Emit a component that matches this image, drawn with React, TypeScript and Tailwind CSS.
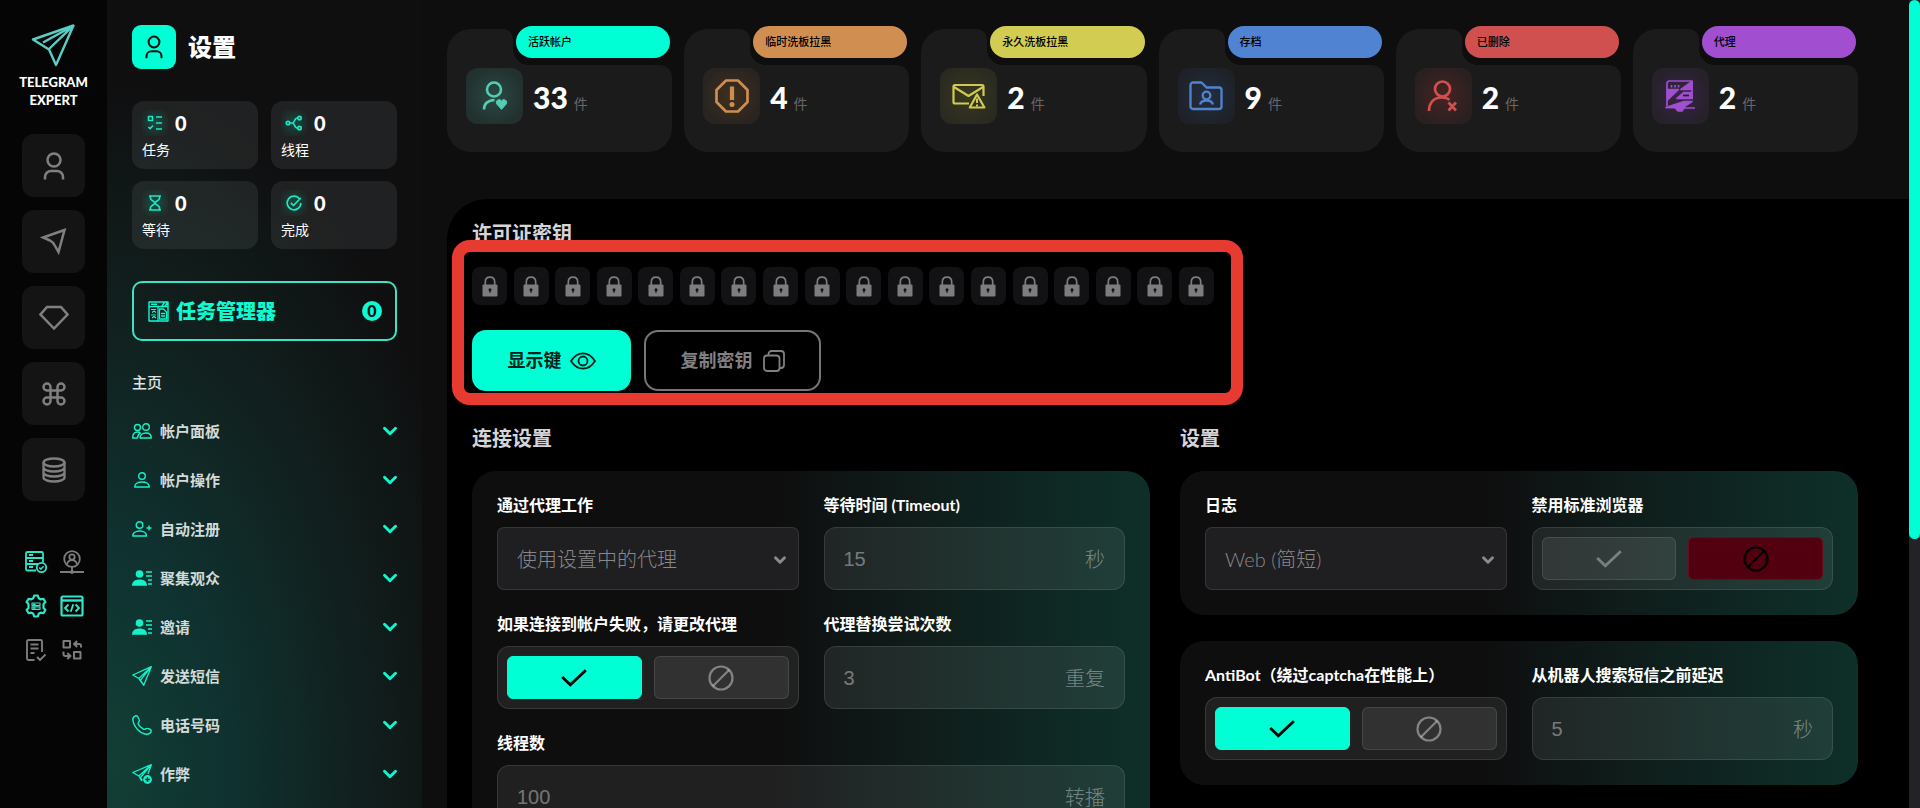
import { Check, ChevronDown, Command } from 'lucide-react';
import type { ReactNode } from 'react';

/* ---------- icons ---------- */

function Svg({ w, h, box, sw = 2, className, children }: { w: number; h: number; box?: string; sw?: number; className?: string; children: ReactNode }) {
  return (
    <svg width={w} height={h} viewBox={box ?? `0 0 ${w} ${h}`} fill="none" stroke="currentColor" strokeWidth={sw} strokeLinejoin="round" className={className} aria-hidden="true">
      {children}
    </svg>
  );
}

const LogoMark = () => (
  <Svg w={44} h={44} sw={2.4} className="text-[#5acdc6]">
    <path d="M42.500 1.500 L2 15.500 L18 25.500 L25 41 Z" />
    <path d="M42 2 L18 25 M42 2 L12 18.500" />
    <path d="M42 2 L22 21" strokeWidth={1.500} />
  </Svg>
);

const Person = ({ w = 24, h = 28, sw = 2.5 }: { w?: number; h?: number; sw?: number }) => (
  <Svg w={w} h={h} box="0 0 24 28" sw={sw}>
    <circle cx="12" cy="8" r="6.500" />
    <path d="M3 27.500v-2.500a6 6 0 0 1 6-6h6a6 6 0 0 1 6 6v2.500" />
  </Svg>
);

const NavArrow = () => (
  <Svg w={27} h={27} sw={2.5}>
    <path d="M24.500 2 L3 9.500 L10 12.500 Q13 14 14.500 17 L18.500 24 Z" strokeLinejoin="miter" />
  </Svg>
);

const Gem = () => (
  <Svg w={30} h={26} sw={2.5}>
    <path d="M8 2h14l6.500 7.500L15 23.500 1.500 9.500z" strokeLinejoin="miter" />
  </Svg>
);

const Stack = () => (
  <Svg w={24} h={26} sw={2.3}>
    <ellipse cx="12" cy="5.500" rx="10.500" ry="4" />
    <path d="M1.500 5.500v15c0 2.200 4.700 4 10.500 4s10.500-1.800 10.500-4v-15M1.500 10.500c0 2.200 4.700 4 10.500 4s10.500-1.800 10.500-4M1.500 15.500c0 2.200 4.700 4 10.500 4s10.500-1.800 10.500-4" />
  </Svg>
);

const ServerCheck = () => (
  <Svg w={24} h={24} sw={1.8}>
    <path d="M12 20.500H3.500a1.500 1.500 0 0 1-1.500-1.500V3.500A1.500 1.500 0 0 1 3.500 2h14A1.500 1.500 0 0 1 19 3.500v9M2 8h17M2 14h12" />
    <path d="M5 5h4M5 11h4M5 17h4" strokeWidth={2} />
    <circle cx="17.500" cy="17.500" r="4.700" />
    <path d="m15.300 17.500 1.600 1.600 2.800-2.900" strokeWidth={1.500} />
  </Svg>
);

const NetworkUser = () => (
  <Svg w={24} h={24} sw={1.8}>
    <circle cx="12" cy="9" r="7.800" />
    <circle cx="12" cy="7" r="2.700" />
    <path d="M7 14.500c.6-3 2.300-4.300 5-4.300s4.400 1.300 5 4.300M12 17v4M0 22h24" />
    <circle cx="12" cy="22" r="1" fill="currentColor" />
  </Svg>
);

const GearServer = () => (
  <Svg w={24} h={24} sw={2.2}>
    <path d="M9.300 4.200 10.200 1.500h3.600l.9 2.700 2 1.200 2.700-.6 2 3.200-1.900 2v4l1.900 2-2 3.200-2.700-.6-2 1.200-.9 2.700h-3.600l-.9-2.700-2-1.200-2.700.6-2-3.200 1.900-2v-4l-1.900-2 2-3.200 2.700.6z" />
    <path d="M8 9h8v2.500H8zM8 12.800h8v2.500H8z" strokeWidth={1.200} />
    <path d="M9 10.200h2.500M9 14h2.500" strokeWidth={1.400} />
  </Svg>
);

const CodeWindow = () => (
  <Svg w={24} h={24} sw={2.2}>
    <rect x="1.500" y="2.500" width="21" height="19" rx="1.500" />
    <path d="M1.500 6.500h21" strokeWidth={2.400} />
    <path d="m8.500 10.500-3.500 3.500 3.500 3.500M15.500 10.500 19 14l-3.500 3.500M13.300 10.300l-2.600 7.400" strokeWidth={1.900} />
  </Svg>
);

const DocCheck = () => (
  <Svg w={24} h={24} sw={1.9}>
    <path d="M10.500 22H4.500A1.500 1.500 0 0 1 3 20.500v-17A1.500 1.500 0 0 1 4.500 2h12A1.500 1.500 0 0 1 18 3.500V14M6.500 6.500h8M6.500 10.500h8M6.500 15h4M13 19l3 3 5.500-5.500" />
  </Svg>
);

const SwapBoxes = () => (
  <Svg w={24} h={24} sw={2}>
    <rect x="3.500" y="3" width="6.500" height="6.500" />
    <rect x="14" y="14" width="6.500" height="6.500" />
    <path d="M21 9.500V8a2 2 0 0 0-2-2h-4.500m2.700-3L14 6l3.200 3M3.500 13.500V16a2 2 0 0 0 2 2H10M7.300 15l3.200 3-3.200 3" />
  </Svg>
);

const TaskIcon = () => (
  <Svg w={16} h={16} sw={1.5}>
    <path d="M1.500 1.500h4v4h-4zM9 2h6M9 8h6M9 14h6M1.500 12l1.600 1.800L6 10.500" />
  </Svg>
);
const BranchIcon = () => (
  <Svg w={18} h={16} sw={1.700}>
    <circle cx="3" cy="8" r="1.700" />
    <circle cx="14.500" cy="3" r="1.700" />
    <circle cx="14.500" cy="13" r="1.700" />
    <path d="M5 8h2.500c2.500 0 1.500-5 5-5M7.500 8c2.500 0 1.500 5 5 5" />
  </Svg>
);
const HourglassIcon = () => (
  <Svg w={14} h={16} sw={1.700}>
    <path d="M1 1h12M1 15h12M2.500 1v2.500c0 2 4.500 3 4.500 4.500s-4.500 2.500-4.500 4.500V15M11.500 1v2.500c0 2-4.500 3-4.500 4.500s4.500 2.500 4.500 4.500V15" />
  </Svg>
);
const DoneIcon = () => (
  <Svg w={16} h={16} sw={1.700}>
    <path d="M13.500 4A6.800 6.800 0 1 0 14.800 8M4.800 7.800l2.700 2.700L14.800 3" />
  </Svg>
);

const ManagerIcon = () => (
  <Svg w={21} h={21} sw={1.4}>
    <path d="M1 1h19v19H1zM1 5.500h19M3 3.300h6M14 5l3-4M17 5l3-4" />
    <path d="M3 8.500h5M4 11.500l2-1.500 2 1.500M3 14h5M4 17l2-1.500L8 17M10 5.500v14.500" strokeWidth={1.200} />
    <path d="M11.500 8h4l3 3v7h-7zM13 12.500h4M13 15h4" strokeWidth={1.300} />
  </Svg>
);

const UsersThin = () => (
  <Svg w={20} h={16} sw={1.400}>
    <circle cx="5.500" cy="4.500" r="3" />
    <circle cx="14" cy="4" r="3.300" />
    <path d="M8 15c0-3 2.500-5 6-5s5.300 2 5.300 5zM8.500 9.800C7.700 9.400 6.700 9 5.500 9 2.500 9 .7 11 .7 15H5.500c0-2 1-4 3-5.200" />
  </Svg>
);
const UserThin = () => (
  <Svg w={20} h={16} sw={1.400}>
    <circle cx="10" cy="4" r="3.300" />
    <path d="M2.700 15c0-3 3-5 7.300-5s7.300 2 7.300 5z" />
  </Svg>
);
const UserPlusThin = () => (
  <Svg w={20} h={16} sw={1.400}>
    <circle cx="7.500" cy="4" r="3.300" />
    <path d="M.7 15c0-3 2.800-5 6.900-5s6.900 2 6.900 5zM17 4.500v5M14.500 7h5" />
  </Svg>
);
const UserList = () => (
  <Svg w={20} h={16} sw={1.400}>
    <circle cx="7.500" cy="4" r="3.800" fill="currentColor" stroke="none" />
    <path d="M0 15.800C0 11.500 3 9.500 7.500 9.500s7.500 2 7.500 6.300z" fill="currentColor" stroke="none" />
    <path d="M14 2h6M14 6h6M16 10h4M16 14h4" />
  </Svg>
);
const PlaneThin = () => (
  <Svg w={20} h={20} sw={1.300}>
    <path d="M19.300.7.800 9l6 3.500L19.300.7 8.500 14l3.200 5.300zM6.800 12.500 11.700 19" />
  </Svg>
);
const PhoneThin = () => (
  <Svg w={20} h={20} sw={1.400}>
    <path d="M3.500.8C2 1.300.8 2.500.8 4.500c.7 7.500 7.500 14 13.700 14.700 2.500 0 4.200-1 4.700-3.200 0-1-.6-1.600-1.600-2-1.400-.6-2.800-1-3.700-.3-.9.600-1.400 1-2.200.600C9 13 7 11 6.200 9c-.3-.9.400-1.500.8-2.300.6-1.200-.5-4-1.500-5.300-.5-.6-1.200-.8-2-.6z" />
  </Svg>
);
const PlanePlus = () => (
  <Svg w={20} h={20} sw={1.300}>
    <path d="M19.300.7.800 8.500l6 3.500L19.300.7 8.500 13.500l2 3M6.800 12l3 5M19.300.7 16 10" />
    <circle cx="15.500" cy="15.500" r="4.400" fill="currentColor" stroke="none" />
    <path d="M15.500 13.200v4.600M13.200 15.500h4.600" strokeWidth={1.500} className="text-[#0f3230]" />
  </Svg>
);

const PersonHeart = () => (
  <Svg w={28} h={30} sw={2.600}>
    <circle cx="13" cy="8.500" r="7" />
    <path d="M3 28.500c0-5.500 3.500-9 10.500-9.500" />
    <path d="M20.500 28.500 15.700 23a2.800 2.800 0 0 1 4.800-3 2.800 2.800 0 0 1 4.800 3z" fill="currentColor" strokeWidth={.8} />
  </Svg>
);
const OctagonAlert = () => (
  <Svg w={34} h={34} sw={2.700}>
    <path d="M11 1.500h12L32.500 11v12L23 32.500H11L1.500 23V11z" />
    <path d="M17 7.500v13.500" strokeWidth={4.200} />
    <circle cx="17" cy="25.500" r="2.500" fill="currentColor" stroke="none" />
  </Svg>
);
const MailAlert = () => (
  <Svg w={34} h={26} sw={2.200}>
    <path d="M17 20.500H3a1.500 1.500 0 0 1-1.500-1.500V3.500A1.500 1.500 0 0 1 3 2h27a1.500 1.500 0 0 1 1.500 1.500V13M2 4l14.500 9L31 4" />
    <path d="M25 11.500 17.800 24.500h14.600z" />
    <path d="M25 15.500v4.500M25 21.500v2" strokeWidth={2} />
  </Svg>
);
const FolderUser = () => (
  <Svg w={34} h={30} sw={2.300}>
    <path d="M1.500 25.500V4A2.500 2.500 0 0 1 4 1.500h8.500l5 5H30A2.500 2.500 0 0 1 32.500 9v16.500A2.500 2.500 0 0 1 30 28H4a2.500 2.500 0 0 1-2.500-2.500z" />
    <circle cx="17.500" cy="14.500" r="3.800" />
    <path d="M11 23.500c1-3.300 3.300-4 6.500-4s5.500.7 6.500 4" />
  </Svg>
);
const PersonX = () => (
  <Svg w={32} h={32} sw={2.700}>
    <circle cx="15.500" cy="9" r="7.500" />
    <path d="M2 31c0-8.500 5-13.500 12.500-13.500 3.500 0 6 .7 8 2.300M21.500 22.500l7.500 8M29 22.500l-7.500 8" />
  </Svg>
);
const ProxyIcon = () => (
  <Svg w={32} h={32} sw={1.700}>
    <path d="M3 26V2.500L4.500 1H28v18" />
    <path d="M28 1.500 17 9.500h11zM3.500 9.500h11L3.500 20z" fill="currentColor" />
    <path d="M13 18.500 20 12.500h8v6z" fill="currentColor" />
    <path d="M2 27.500 20 21.500h8l-7 4.500-3 5h-4l-3-3.500z" fill="currentColor" />
    <path d="M2 27.500h9M20 28h11" />
    <path d="M7.500 5v2.500M11 5v2.500M14.500 5v2.500" />
    <path d="M19 15.500h6" className="text-[#261b2c]" />
  </Svg>
);

const LockGlyph = () => (
  <Svg w={16} h={21} sw={1.700}>
    <path d="M3.300 9V6.200C3.300 3 5.300 1.200 8 1.200s4.700 1.800 4.700 5V9" />
    <path d="M.5 9.500A1 1 0 0 1 1.500 8.500h13a1 1 0 0 1 1 1V19.500a1 1 0 0 1-1 1h-13a1 1 0 0 1-1-1z" fill="currentColor" stroke="none" />
    <circle cx="8" cy="13.700" r="1.500" fill="#151417" stroke="none" />
    <path d="M8 13.500v3.300" stroke="#151417" strokeWidth={1.300} />
  </Svg>
);

const EyeGlyph = () => (
  <Svg w={26} h={18} sw={1.800}>
    <path d="M1 9C4.500 3.500 8.500 1.300 13 1.300S21.500 3.500 25 9c-3.500 5.500-7.500 7.700-12 7.700S4.500 14.500 1 9z" />
    <circle cx="13" cy="9" r="4.500" />
  </Svg>
);
const CopyGlyph = () => (
  <Svg w={22} h={22} sw={1.800}>
    <rect x="1" y="5.500" width="15.500" height="15.500" rx="3" />
    <path d="M5.500 5.500V4a3 3 0 0 1 3-3H18a3 3 0 0 1 3 3v11a3 3 0 0 1-3 3h-1.500" />
  </Svg>
);
const BanGlyph = () => (
  <Svg w={26} h={26} sw={2.200}>
    <circle cx="13" cy="13" r="11.500" />
    <path d="M5 21 21 5" />
  </Svg>
);
const TickGlyph = () => (
  <Svg w={26} h={18} sw={2.800}>
    <path d="M1.200 8 9.300 15.800 24.800 1.200" strokeLinejoin="miter" />
  </Svg>
);

/* ---------- data ---------- */

const railItems = [
  { name: '帐户', icon: <Person /> },
  { name: '发送', icon: <NavArrow /> },
  { name: '高级', icon: <Gem /> },
  { name: '命令', icon: <Command size={28} strokeWidth={2.100} /> },
  { name: '数据库', icon: <Stack /> },
];

const railTools = [
  { name: '服务器', icon: <ServerCheck />, on: true },
  { name: '网络用户', icon: <NetworkUser />, on: false },
  { name: '服务器设置', icon: <GearServer />, on: true },
  { name: '代码', icon: <CodeWindow />, on: true },
  { name: '日志', icon: <DocCheck />, on: false },
  { name: '转换', icon: <SwapBoxes />, on: false },
];

const counters = [
  { label: '任务', icon: <TaskIcon /> },
  { label: '线程', icon: <BranchIcon /> },
  { label: '等待', icon: <HourglassIcon /> },
  { label: '完成', icon: <DoneIcon /> },
];

const menu = [
  { label: '帐户面板', icon: <UsersThin /> },
  { label: '帐户操作', icon: <UserThin /> },
  { label: '自动注册', icon: <UserPlusThin /> },
  { label: '聚集观众', icon: <UserList /> },
  { label: '邀请', icon: <UserList /> },
  { label: '发送短信', icon: <PlaneThin /> },
  { label: '电话号码', icon: <PhoneThin /> },
  { label: '作弊', icon: <PlanePlus /> },
];

const stats = [
  { label: '活跃帐户', value: 33, pill: 'bg-[#00ffd5]', tile: 'text-[#55cdb5] bg-[radial-gradient(circle,#2a4a44,#22302e_75%)]', icon: <PersonHeart /> },
  { label: '临时洗板拉黑', value: 4, pill: 'bg-[#d08f51]', tile: 'text-[#cf8e50] bg-[radial-gradient(circle,#40301f,#292421_75%)]', icon: <OctagonAlert /> },
  { label: '永久洗板拉黑', value: 2, pill: 'bg-[#d2cc52]', tile: 'text-[#d0cb50] bg-[radial-gradient(circle,#3a3920,#2a2a20_75%)]', icon: <MailAlert /> },
  { label: '存档', value: 9, pill: 'bg-[#5083d2]', tile: 'text-[#5084d0] bg-[radial-gradient(circle,#242e40,#1e2228_75%)]', icon: <FolderUser /> },
  { label: '已删除', value: 2, pill: 'bg-[#cf504e]', tile: 'text-[#d05050] bg-[radial-gradient(circle,#452424,#2b2020_75%)]', icon: <PersonX /> },
  { label: '代理', value: 2, pill: 'bg-[#a14fd0]', tile: 'text-[#a04fd0] bg-[radial-gradient(circle,#3a2448,#26212a_75%)]', icon: <ProxyIcon /> },
];

/* ---------- form parts ---------- */

const labelClass = 'text-[16px] leading-[18px] font-bold text-white whitespace-nowrap';

function Field({ id, label, children, wide }: { id: string; label: string; children: ReactNode; wide?: boolean }) {
  return (
    <div className={wide ? 'col-span-2 flex flex-col gap-[13px]' : 'flex min-w-0 flex-col gap-[13px]'}>
      <label htmlFor={id} className={labelClass}>{label}</label>
      {children}
    </div>
  );
}

function ValueField({ id, label, value, unit, wide }: { id: string; label: string; value: string; unit: string; wide?: boolean }) {
  return (
    <Field id={id} label={label} wide={wide}>
      <div className="flex h-[63px] items-center rounded-xl border border-white/10 bg-white/[0.08] px-[19px] text-[20px] text-white/40">
        <input id={id} defaultValue={value} className='min-w-0 flex-1 bg-transparent font-["Liberation_Sans",sans-serif] outline-none' />
        <span className="font-light">{unit}</span>
      </div>
    </Field>
  );
}

function SelectField({ id, label, value }: { id: string; label: string; value: string }) {
  return (
    <Field id={id} label={label}>
      <div className="relative h-[63px]">
        <select id={id} className="h-full w-full appearance-none rounded-[7px] border border-white/10 bg-[#1f1e20] px-[19px] text-[20px] font-light text-[#88888a] outline-none">
          <option>{value}</option>
        </select>
        <ChevronDown size={18} strokeWidth={4} className="pointer-events-none absolute top-6 right-2.5 text-[#8a8a8c]" aria-hidden="true" />
      </div>
    </Field>
  );
}

function ToggleField({ label, on }: { label: string; on: boolean }) {
  const base = 'flex flex-1 items-center justify-center rounded-[6px] border';
  return (
    <div className="flex min-w-0 flex-col gap-[13px]">
      <span className={labelClass}>{label}</span>
      <div role="group" aria-label={label} className="flex h-[63px] gap-3 rounded-xl border border-white/10 bg-white/[0.08] p-[9px]">
        <button type="button" aria-label="开" aria-pressed={on} className={`${base} ${on ? 'border-[#00ffd5] bg-[#00ffd5] text-black' : 'border-white/10 bg-white/[0.08] text-white/35'}`}>
          <TickGlyph />
        </button>
        <button type="button" aria-label="关" aria-pressed={!on} className={`${base} ${on ? 'border-white/10 bg-white/[0.08] text-white/40' : 'border-[#6b0a1c] bg-[#52000f] text-black'}`}>
          <BanGlyph />
        </button>
      </div>
    </div>
  );
}

function Card({ children }: { children: ReactNode }) {
  return (
    <div className="grid grid-cols-2 gap-x-[25px] gap-y-[25px] rounded-[24px] bg-[linear-gradient(90deg,#0e0e0f_45%,#0f1c1a_65%,#0e3029_100%)] p-[25px]">
      {children}
    </div>
  );
}

const headingClass = 'text-[20px] leading-[20px] font-bold text-[#d6d4d7]';

/* ---------- page regions ---------- */

function Rail() {
  return (
    <nav className="flex w-[107px] shrink-0 flex-col items-center bg-[#050505] pt-6">
      <a href="#" className="flex flex-col items-center text-center text-[13px] leading-[18px] font-black text-white">
        <LogoMark />
        <span className="mt-[5px]">TELEGRAM<br />EXPERT</span>
      </a>
      <div className="mt-[25px] flex flex-col gap-[13px]">
        {railItems.map((item) => (
          <button key={item.name} type="button" aria-label={item.name} className="flex size-[63px] items-center justify-center rounded-xl bg-[#141414] text-[#808080]">
            {item.icon}
          </button>
        ))}
      </div>
      <div className="mt-[49px] grid grid-cols-2 gap-x-3 gap-y-5">
        {railTools.map((tool) => (
          <button key={tool.name} type="button" aria-label={tool.name} className={tool.on ? 'text-[#2ee6c8]' : 'text-[#7c7c7c]'}>
            {tool.icon}
          </button>
        ))}
      </div>
    </nav>
  );
}

function Sidebar() {
  return (
    <aside className="w-[315px] shrink-0 overflow-hidden bg-[#0f0f10] bg-[radial-gradient(120%_85%_at_0%_95%,#123e35_0%,#0f3230_32%,#11211f_64%,#0f0f10_100%)] px-[25px] pt-[25px]">
      <div className="flex items-center gap-3">
        <span className="flex size-11 items-center justify-center rounded-[9px] bg-[#00ffd5] text-[#06110f]"><Person w={20} h={24} sw={2.4} /></span>
        <h1 className="text-[24px] leading-[28px] font-black text-white">设置</h1>
      </div>

      <div className="mt-8 grid grid-cols-2 gap-x-[13px] gap-y-3">
        {counters.map((c) => (
          <div key={c.label} className="h-[68px] rounded-xl bg-[#9fa8a5]/12 px-2.5 pt-[9px]">
            <div className="flex items-center gap-[7px]">
              <span className="flex size-[26px] items-center justify-center rounded-md bg-[radial-gradient(circle,#00c8a040,#00c8a008_75%)] text-[#1fe6c0]">{c.icon}</span>
              <span className="text-[20px] leading-[24px] font-black text-white">0</span>
            </div>
            <div className="mt-1 text-[14px] leading-[20px] text-white">{c.label}</div>
          </div>
        ))}
      </div>

      <button type="button" className="mt-8 flex h-[60px] w-full items-center rounded-[10px] border-2 border-[#3de3c5] pr-[13px] pl-[14px] text-[20px] leading-[24px] font-black text-[#0ffad2]">
        <ManagerIcon />
        <span className="ml-[7px]">任务管理器</span>
        <span className="ml-auto flex size-5 items-center justify-center rounded-full bg-[#0ffad2] text-[16px] font-black text-[#0a1412]">0</span>
      </button>

      <a href="#" className="mt-[29px] flex h-6 items-center text-[15px] font-medium text-[#dfe3e2]">主页</a>
      <ul>
        {menu.map((m) => (
          <li key={m.label}>
            <button type="button" className="mt-[25px] flex h-6 w-full items-center gap-2 text-[15px] leading-[24px] font-bold text-[#d3dad8]">
              <span className="flex w-5 justify-center text-[#15f2ca]">{m.icon}</span>
              {m.label}
              <ChevronDown size={22} strokeWidth={3.200} className="-mr-1 ml-auto text-[#10f5cd]" aria-hidden="true" />
            </button>
          </li>
        ))}
      </ul>
    </aside>
  );
}

function StatCard({ stat }: { stat: (typeof stats)[number] }) {
  return (
    <div>
      <div className="relative flex h-[39px] items-start">
        <div className="mt-[3px] h-9 w-[66px] rounded-tl-[24px] rounded-tr-[10px] bg-[#1b1b1c]" />
        <div className="absolute bottom-0 left-[66px] size-4 bg-[radial-gradient(circle_at_100%_0%,transparent_16px,#1b1b1c_16px)]" />
        <div className={`relative mr-0.5 ml-[3px] flex h-8 flex-1 items-center rounded-full px-3 text-[11px] font-medium text-black ${stat.pill}`}>{stat.label}</div>
      </div>
      <div className="flex h-[87px] items-start rounded-tr-[12px] rounded-b-[24px] bg-[#1b1b1c] pt-[3px] pl-[19px]">
        <span className={`flex h-14 w-[57px] items-center justify-center rounded-xl ${stat.tile}`}>{stat.icon}</span>
        <p className="mt-3 ml-2.5 flex items-baseline gap-1.5 leading-[34px]">
          <span className="text-[30px] font-black text-white">{stat.value}</span>
          <span className="text-[14px] text-[#68676b]">件</span>
        </p>
      </div>
    </div>
  );
}

export default function App() {
  return (
    <div className='flex h-screen overflow-hidden bg-[#0e0e0f] font-[Lato,"Noto_Sans_CJK_SC",sans-serif]'>
      <Rail />
      <Sidebar />
      <main className="min-w-0 flex-1 overflow-hidden pt-[26px] pl-[25px]">
        <div className="grid grid-cols-6 gap-3 pr-[51px]">
          {stats.map((s) => <StatCard key={s.label} stat={s} />)}
        </div>

        <div className="mt-[47px] rounded-tl-[40px] bg-black pt-6 pr-[51px] pb-12 pl-[25px]">
          <h2 className={headingClass}>许可证密钥</h2>
          <section aria-label="许可证密钥" className="relative mt-6">
            <div className="flex w-full max-w-[742px] justify-between">
              {Array.from({ length: 18 }, (_, i) => (
                <span key={i} className="flex h-[38px] w-[35px] items-center justify-center rounded-lg bg-[#121113] text-[#7d7c7f]"><LockGlyph /></span>
              ))}
            </div>
            <div className="mt-[25px] flex gap-[13px] text-[18px] font-bold">
              <button type="button" className="flex h-[61px] w-[159px] items-center justify-center gap-2 rounded-[14px] bg-[#00ffd5] text-[#06201b]">显示键<EyeGlyph /></button>
              <button type="button" className="flex h-[61px] w-[177px] items-center justify-center gap-2.5 rounded-[14px] border-2 border-[#767578] text-[#807f82]">复制密钥<CopyGlyph /></button>
            </div>
            <div className="pointer-events-none absolute -top-[27px] -bottom-[14px] -left-5 w-[791px] rounded-[18px] border-[12px] border-[#e73b32]" />
          </section>

          <div className="mt-[37px] grid grid-cols-2 gap-x-[30px]">
            <section>
              <h2 className={headingClass}>连接设置</h2>
              <div className="mt-[23px]">
                <Card>
                  <SelectField id="proxy" label="通过代理工作" value="使用设置中的代理" />
                  <ValueField id="timeout" label="等待时间 (Timeout)" value="15" unit="秒" />
                  <ToggleField label="如果连接到帐户失败，请更改代理" on />
                  <ValueField id="attempts" label="代理替换尝试次数" value="3" unit="重复" />
                  <ValueField id="threads" label="线程数" value="100" unit="转播" wide />
                </Card>
              </div>
            </section>
            <section>
              <h2 className={headingClass}>设置</h2>
              <div className="mt-[23px] flex flex-col gap-[26px]">
                <Card>
                  <SelectField id="log" label="日志" value="Web (简短)" />
                  <ToggleField label="禁用标准浏览器" on={false} />
                </Card>
                <Card>
                  <ToggleField label="AntiBot（绕过captcha在性能上）" on />
                  <ValueField id="delay" label="从机器人搜索短信之前延迟" value="5" unit="秒" />
                </Card>
              </div>
            </section>
          </div>
        </div>
      </main>
      <div className="w-[11px] shrink-0 bg-[#232226]" aria-hidden="true">
        <div className="h-2/3 rounded-full bg-[#00ffd5]" />
      </div>
    </div>
  );
}
